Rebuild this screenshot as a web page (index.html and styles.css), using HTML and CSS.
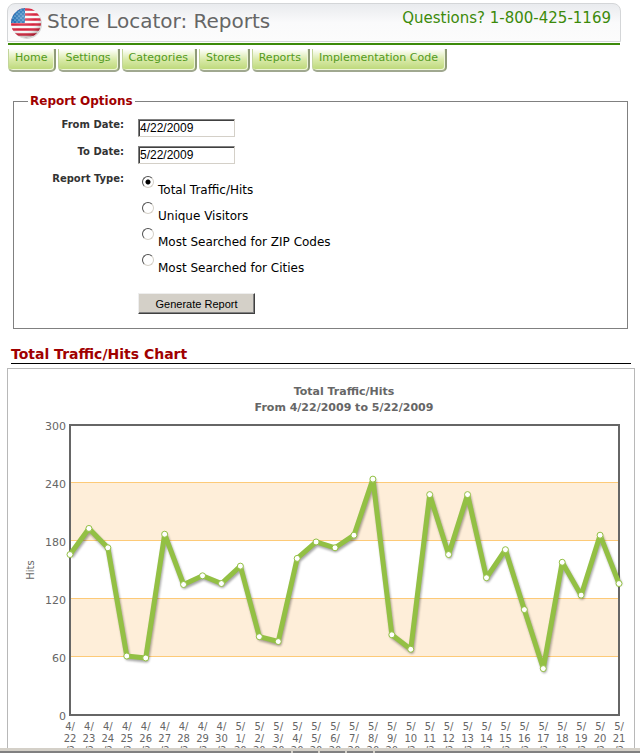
FILE: index.html
```html
<!DOCTYPE html>
<html lang="en">
<head>
<meta charset="UTF-8" />
<title>Store Locator: Reports</title>
<link rel="stylesheet" href="styles.css">
</head>
<body>
<div class="page">
  <header class="header">
    <svg class="logo" viewBox="0 0 34 34" aria-hidden="true">
      <defs>
        <clipPath id="globe"><circle cx="16" cy="16" r="15" /></clipPath>
        <radialGradient id="shine" cx="40%" cy="30%" r="70%">
          <stop offset="0" stop-color="#fff" stop-opacity="0.3" />
          <stop offset="0.6" stop-color="#fff" stop-opacity="0" />
          <stop offset="1" stop-color="#200" stop-opacity="0.3" />
        </radialGradient>
        <pattern id="stars" width="4" height="4" patternUnits="userSpaceOnUse">
          <circle cx="1" cy="1" r="0.6" fill="#d4e9f8" />
          <circle cx="3" cy="3" r="0.6" fill="#d4e9f8" />
        </pattern>
      </defs>
      <circle class="logo-shadow" cx="17" cy="17" r="15" />
      <g clip-path="url(#globe)">
        <rect width="32" height="32" fill="#fafafa" />
        <path d="M0 2.5H32M0 7.5H32M0 12.5H32M0 17.5H32M0 22.5H32M0 27.5H32" stroke="#d6223c" stroke-width="2.5" />
        <rect width="15" height="16" fill="#1a6cb2" />
        <rect width="15" height="16" fill="url(#stars)" />
        <circle cx="16" cy="16" r="15" fill="url(#shine)" />
      </g>
    </svg>
    <h1>Store Locator: Reports</h1>
    <span class="phone">Questions? 1-800-425-1169</span>
  </header>

  <nav class="nav">
    <a href="#">Home</a>
    <a href="#">Settings</a>
    <a href="#">Categories</a>
    <a href="#">Stores</a>
    <a href="#">Reports</a>
    <a href="#">Implementation Code</a>
  </nav>

  <form>
    <fieldset class="options">
      <legend>Report Options</legend>
      <div class="row">
        <label for="fromDate">From Date:</label>
        <input type="text" id="fromDate" value="4/22/2009" />
      </div>
      <div class="row">
        <label for="toDate">To Date:</label>
        <input type="text" id="toDate" value="5/22/2009" />
      </div>
      <div class="row" role="radiogroup" aria-labelledby="typeLabel">
        <span class="row-label" id="typeLabel">Report Type:</span>
        <div class="choices">
          <label><input type="radio" name="type" checked /><span>Total Traffic/Hits</span></label>
          <label><input type="radio" name="type" /><span>Unique Visitors</span></label>
          <label><input type="radio" name="type" /><span>Most Searched for ZIP Codes</span></label>
          <label><input type="radio" name="type" /><span>Most Searched for Cities</span></label>
          <button type="button">Generate Report</button>
        </div>
      </div>
    </fieldset>
  </form>

  <h2>Total Traffic/Hits Chart</h2>
  <div class="chart-box">
    <svg id="chart" class="chart" viewBox="0 0 626 420"></svg>
  </div>
</div>
<footer class="statusbar"><i></i><i></i><i></i><i></i><i></i></footer>

<script>
  const hits = [166, 193, 173, 61, 59, 187, 135, 144, 136, 154, 81, 76, 162, 179, 173,
    186, 244, 83, 68, 228, 166, 228, 142, 171, 109, 48, 158, 124, 186, 136];
  const left = 62, right = 611, top_ = 56, bottom = 346, max = 300;
  const step = (right - left) / (hits.length - 1);
  const y = v => bottom - v * (bottom - top_) / max;
  const x = i => left + i * step;

  let svg = '';

  // bands and grid lines
  [240, 120].forEach(v => {
    svg += `<rect class="band" x="${left}" y="${y(v)}" width="${right - left}" height="${y(v - 60) - y(v)}" />`;
  });
  [60, 120, 180, 240].forEach(v => {
    svg += `<line class="grid-line" x1="${left}" x2="${right}" y1="${y(v) - 0.5}" y2="${y(v) - 0.5}" />`;
  });
  svg += `<rect class="frame" x="${left}" y="${top_}" width="${right - left}" height="${bottom - top_}" />`;

  // titles and y axis
  svg += '<text class="title" x="336" y="26">Total Traffic/Hits</text>';
  svg += '<text class="title" x="336" y="42">From 4/22/2009 to 5/22/2009</text>';
  svg += '<text class="axis-name" transform="translate(26 201) rotate(-90)">Hits</text>';
  for (let v = 0; v <= max; v += 60) {
    svg += `<text class="y-label" x="58" y="${y(v) + 5}">${v}</text>`;
  }

  // dates, one part per line
  hits.forEach((h, i) => {
    const d = new Date(2009, 3, 22 + i);
    const day = d.getDate();
    const lines = [(d.getMonth() + 1) + '/', day < 10 ? day + '/' : day, day < 10 ? '20' : '/2'];
    lines.forEach((t, n) => {
      svg += `<text class="x-label" x="${x(i)}" y="${361 + n * 12}">${t}</text>`;
    });
  });

  const points = hits.map((h, i) => x(i) + ',' + y(h)).join(' ');
  svg += `<polyline class="line" points="${points}" />`;
  hits.forEach((h, i) => {
    svg += `<circle class="dot" cx="${x(i)}" cy="${y(h)}" r="3" />`;
  });

  document.getElementById('chart').innerHTML = svg;
</script>
</body>
</html>
```

FILE: styles.css
```css
* {
  box-sizing: border-box;
}
body {
  margin: 0;
  height: 100vh;
  display: flex;
  flex-direction: column;
  overflow: hidden;
  background: #fff;
  font-family: Verdana, "DejaVu Sans", sans-serif;
  font-size: 11px;
  color: #000;
}
.page {
  flex: 1;
  min-height: 0;
  overflow: hidden;
  padding: 3px 5px 0 7px;
}
.header {
  display: flex;
  align-items: flex-start;
  height: 39px;
  margin-right: 14px;
  padding: 3px 9px 0 2px;
  border: 1px solid #d4d6d8;
  border-radius: 8px 8px 0 0;
  background: linear-gradient(#e9ebee, #fafafb 50%, #fcfcfc);
}
.logo {
  width: 34px;
  height: 34px;
}
.logo-shadow {
  fill: #000;
  opacity: 0.15;
}
h1 {
  flex: 1;
  margin: 0 0 0 3px;
  font-size: 20px;
  line-height: 28px;
  font-weight: normal;
  color: #666;
}
.phone {
  font-size: 15px;
  line-height: 22px;
  color: #3c8a0a;
}
.nav {
  display: flex;
  gap: 2px;
  margin: 1px 15px 0 1px;
  padding-top: 4px;
  border-top: 2px solid #3c8a0a;
}
.nav a {
  height: 23px;
  padding: 0 7px 0 6px;
  border: 1px solid #c3d59b;
  border-top: 0;
  border-right: 2px solid #8f9b78;
  border-bottom: 2px solid #a0a890;
  border-radius: 0 0 5px 5px;
  background: linear-gradient(#fff, #d9eaa9 50%, #bcd878);
  box-shadow: inset -1px -1px 0 #eef6d8;
  line-height: 17px;
  color: #539a1c;
  text-decoration: none;
}
form {
  margin: 21px 7px 0 6px;
}
.options {
  margin: 0;
  padding: 9px 0 14px;
  border: 1px solid #808080;
}
.options legend {
  margin-left: 14px;
  padding: 0 2px;
  font-size: 12px;
  line-height: 16px;
  font-weight: bold;
  color: #a00000;
}
.row {
  display: grid;
  grid-template-columns: 110px 1fr;
  column-gap: 14px;
  align-items: start;
  min-height: 27px;
}
.row > label,
.row-label {
  text-align: right;
  font-size: 10px;
  line-height: 14px;
  font-weight: bold;
  color: #333;
}
.row input[type="text"] {
  width: 97px;
  height: 18px;
  margin: 1px 0 0;
  padding: 0 1px;
  border: 1px solid;
  border-color: #808080 #d4d0c8 #d4d0c8 #808080;
  box-shadow: inset 1px 1px 0 #404040;
  font-family: Arial, "Liberation Sans", sans-serif;
  font-size: 12px;
}
.choices label {
  display: flex;
  gap: 4px;
  height: 26px;
  padding-left: 4px;
  font-size: 12px;
}
.choices label span {
  padding-top: 10px;
  line-height: 16px;
}
.choices input {
  appearance: none;
  width: 12px;
  height: 12px;
  margin: 4px 0 0;
  border: 1px solid;
  border-color: #505050 #d4d0c8 #d4d0c8 #505050;
  border-radius: 50%;
  background: #fff;
}
.choices input:checked {
  background: radial-gradient(circle, #000 2px, #fff 3px);
}
.choices button {
  display: block;
  width: 117px;
  height: 21px;
  margin-top: 17px;
  padding: 0;
  border: 1px solid;
  border-color: #eee #404040 #404040 #eee;
  box-shadow: inset -1px -1px 0 #808080;
  background: #d4d0c8;
  font-family: Arial, "Liberation Sans", sans-serif;
  font-size: 11px;
}
h2 {
  margin: 17px 4px 4px;
  border-bottom: 1px solid #000;
  font-size: 14px;
  line-height: 17px;
  color: #a00000;
}
.chart-box {
  border: 1px solid #b8b8b8;
}
.chart {
  display: block;
  width: 100%;
  font-size: 10px;
  fill: #666;
}
.chart .band {
  fill: #feeed9;
}
.chart .grid-line {
  stroke: #fdca78;
}
.chart .frame {
  fill: none;
  stroke: #666;
  stroke-width: 2px;
}
.chart .title {
  font-size: 11px;
  font-weight: bold;
  text-anchor: middle;
}
.chart .axis-name,
.chart .x-label {
  text-anchor: middle;
}
.chart .y-label {
  font-size: 11px;
  text-anchor: end;
}
.chart .line {
  fill: none;
  stroke: #93c044;
  stroke-width: 5px;
  stroke-linejoin: round;
  filter: drop-shadow(1px 2px 1px rgba(0, 0, 0, 0.35));
}
.chart .dot {
  fill: #fff;
  stroke: #93c044;
}
.statusbar {
  display: grid;
  grid-template-columns: 46fr 4fr 4fr 4fr 42fr;
  gap: 2px;
  height: 5px;
  padding-top: 3px;
  background: #d4d0c8;
}
.statusbar i {
  background: #808080;
}
```
